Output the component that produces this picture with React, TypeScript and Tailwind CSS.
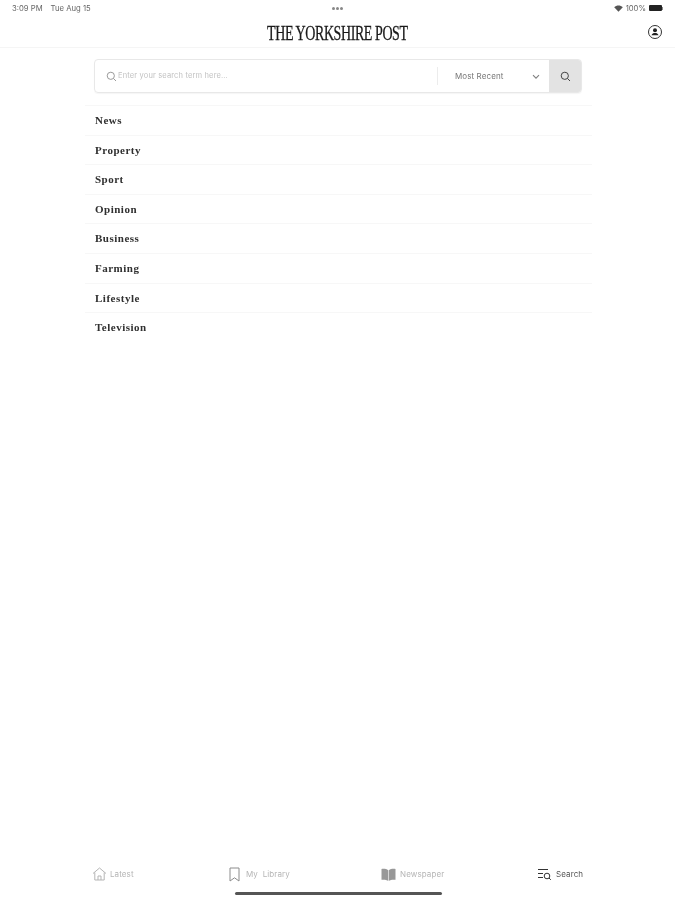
import React from "react";

const sections = ["News", "Property", "Sport", "Opinion", "Business", "Farming", "Lifestyle", "Television"];

function TabItem({ icon, label, active, className }: { icon: React.ReactNode; label: string; active?: boolean; className: string }) {
  return (
    <div className={`flex items-center ${className}`}>
      {icon}
      <span className={`text-[8px] whitespace-pre font-['Inter',sans-serif] tracking-[0.1px] ${active ? "text-[#555555]" : "text-[#b5b5b5]"}`}>{label}</span>
    </div>
  );
}

export default function App() {
  return (
    <div className="w-[675px] h-[900px] bg-white flex flex-col font-['Inter',sans-serif] overflow-hidden blur-[0.4px]">
      {/* Status bar */}
      <div className="h-[17px] px-[12px] flex items-center justify-between text-[7.7px] text-[#666666] shrink-0">
        <div className="flex gap-[8px] w-[120px] whitespace-nowrap">
          <span>3:09 PM</span>
          <span>Tue Aug 15</span>
        </div>
        <div className="flex gap-[1.5px]">
          <span className="w-[2.5px] h-[2.5px] rounded-full bg-[#888888]" />
          <span className="w-[2.5px] h-[2.5px] rounded-full bg-[#888888]" />
          <span className="w-[2.5px] h-[2.5px] rounded-full bg-[#888888]" />
        </div>
        <div className="flex items-center justify-end gap-[3px] w-[120px]">
          <svg width="9" height="7" viewBox="0 0 9 7"><path d="M4.500 6.800 0.200 2.200C2.600 0 6.400 0 8.800 2.200Z" fill="#555555" /></svg>
          <span>100%</span>
          <span className="w-[13px] h-[6px] rounded-[1px] bg-[#222222]" />
          <span className="w-[1px] h-[3px] bg-[#888888] -ml-[3px]" />
        </div>
      </div>

      {/* Header */}
      <div className="h-[31px] flex items-center justify-center relative border-b border-[#f5f5f5] shrink-0">
        <span className="font-['Liberation_Serif',serif] text-[20px] leading-none text-[#1a1a1a] tracking-[-0.6px] scale-x-[0.7] whitespace-nowrap mt-[1px] [-webkit-text-stroke:0.3px_#1a1a1a]">
          THE YORKSHIRE POST
        </span>
        <svg className="absolute right-[12px] top-[7px]" width="16" height="16" viewBox="0 0 16 16">
          <circle cx="8" cy="8" r="6.500" fill="none" stroke="#333333" strokeWidth="1" />
          <circle cx="8" cy="6.300" r="2" fill="#222222" />
          <path d="M4.500 11.200c.5-1.600 2-2.200 3.500-2.200s3 .6 3.500 2.200Z" fill="#222222" />
        </svg>
      </div>

      {/* Search */}
      <div className="mt-[11px] ml-[94px] w-[488px] h-[34px] flex rounded-[4px] border border-[#e8e8e8] shadow-[0_1px_1px_rgba(0,0,0,0.04)] shrink-0 overflow-hidden">
        <div className="flex items-center flex-1 pl-[11px]">
          <svg width="11" height="11" viewBox="0 0 11 11" fill="none" stroke="#9a9a9a" strokeWidth="1">
            <circle cx="4.800" cy="4.800" r="3.600" />
            <path d="M7.500 7.500 10 10" />
          </svg>
          <span className="ml-[1px] text-[7.5px] text-[#c2c2c2] tracking-[0.15px]">Enter your search term here...</span>
        </div>
        <div className="w-[112px] flex items-center relative border-l border-[#ececec] my-[7px] pl-[17px]">
          <span className="text-[8px] text-[#777777] tracking-[0.1px]">Most Recent</span>
          <svg className="absolute left-[94px] top-[7px]" width="8" height="6" viewBox="0 0 8 6" fill="none" stroke="#808080" strokeWidth="1.100">
            <path d="M1 1.200 4 4.200 7 1.200" />
          </svg>
        </div>
        <div className="w-[32px] bg-[#e3e3e3] flex items-center justify-center">
          <svg width="11" height="11" viewBox="0 0 11 11" fill="none" stroke="#444444" strokeWidth="1">
            <circle cx="4.800" cy="4.800" r="3.600" />
            <path d="M7.500 7.500 10 10" />
          </svg>
        </div>
      </div>

      {/* Sections */}
      <div className="mt-[12px] ml-[85px] w-[507px] shrink-0">
        {sections.map((s) => (
          <div key={s} className="h-[29.6px] flex items-center pl-[10px] border-t border-[#f7f7f7] font-['Liberation_Serif',serif] font-bold text-[11px] tracking-[0.5px] text-[#303030]">
            {s}
          </div>
        ))}
      </div>

      <div className="flex-1" />

      {/* Tab bar */}
      <div className="h-[52px] relative shrink-0 flex pl-[92px]">
        <TabItem
          className="w-[136px] gap-[3px]"
          label="Latest"
          icon={
            <svg width="15" height="14" viewBox="0 0 15 14" fill="none" stroke="#b5b5b5" strokeWidth="1">
              <path d="M1 6.500 7.500 1 14 6.500M2.800 5.500V13h9.400V5.500M6 13V9h3v4" />
            </svg>
          }
        />
        <TabItem
          className="w-[153px] gap-[5px]"
          label="My  Library"
          icon={
            <svg width="13" height="15" viewBox="0 0 13 15" fill="none" stroke="#8c8c8c" strokeWidth="1">
              <path d="M2 1h9v13L6.500 10.800 2 14Z" />
            </svg>
          }
        />
        <TabItem
          className="w-[156px] gap-[4px]"
          label="Newspaper"
          icon={
            <svg width="15" height="13" viewBox="0 0 15 13" fill="#989898">
              <path d="M0.500 1C3 .6 5.500 1 7.200 2.200V12.800C5.500 11.800 3 11.400.5 11.800ZM14.500 1C12 .6 9.500 1 7.800 2.200V12.800C9.500 11.800 12 11.400 14.500 11.800Z" />
            </svg>
          }
        />
        <TabItem
          className="gap-[4px]"
          label="Search"
          active
          icon={
            <svg width="15" height="13" viewBox="0 0 15 13" fill="none" stroke="#333333" strokeWidth="1">
              <path d="M1 1.500h10M1 5.500h5M1 9.500h5" />
              <circle cx="10" cy="8" r="2.800" />
              <path d="M12 10l1.800 1.800" />
            </svg>
          }
        />
        <div className="absolute left-[235px] top-[44px] w-[207px] h-[3px] rounded-full bg-[#555555]" />
      </div>
    </div>
  );
}
